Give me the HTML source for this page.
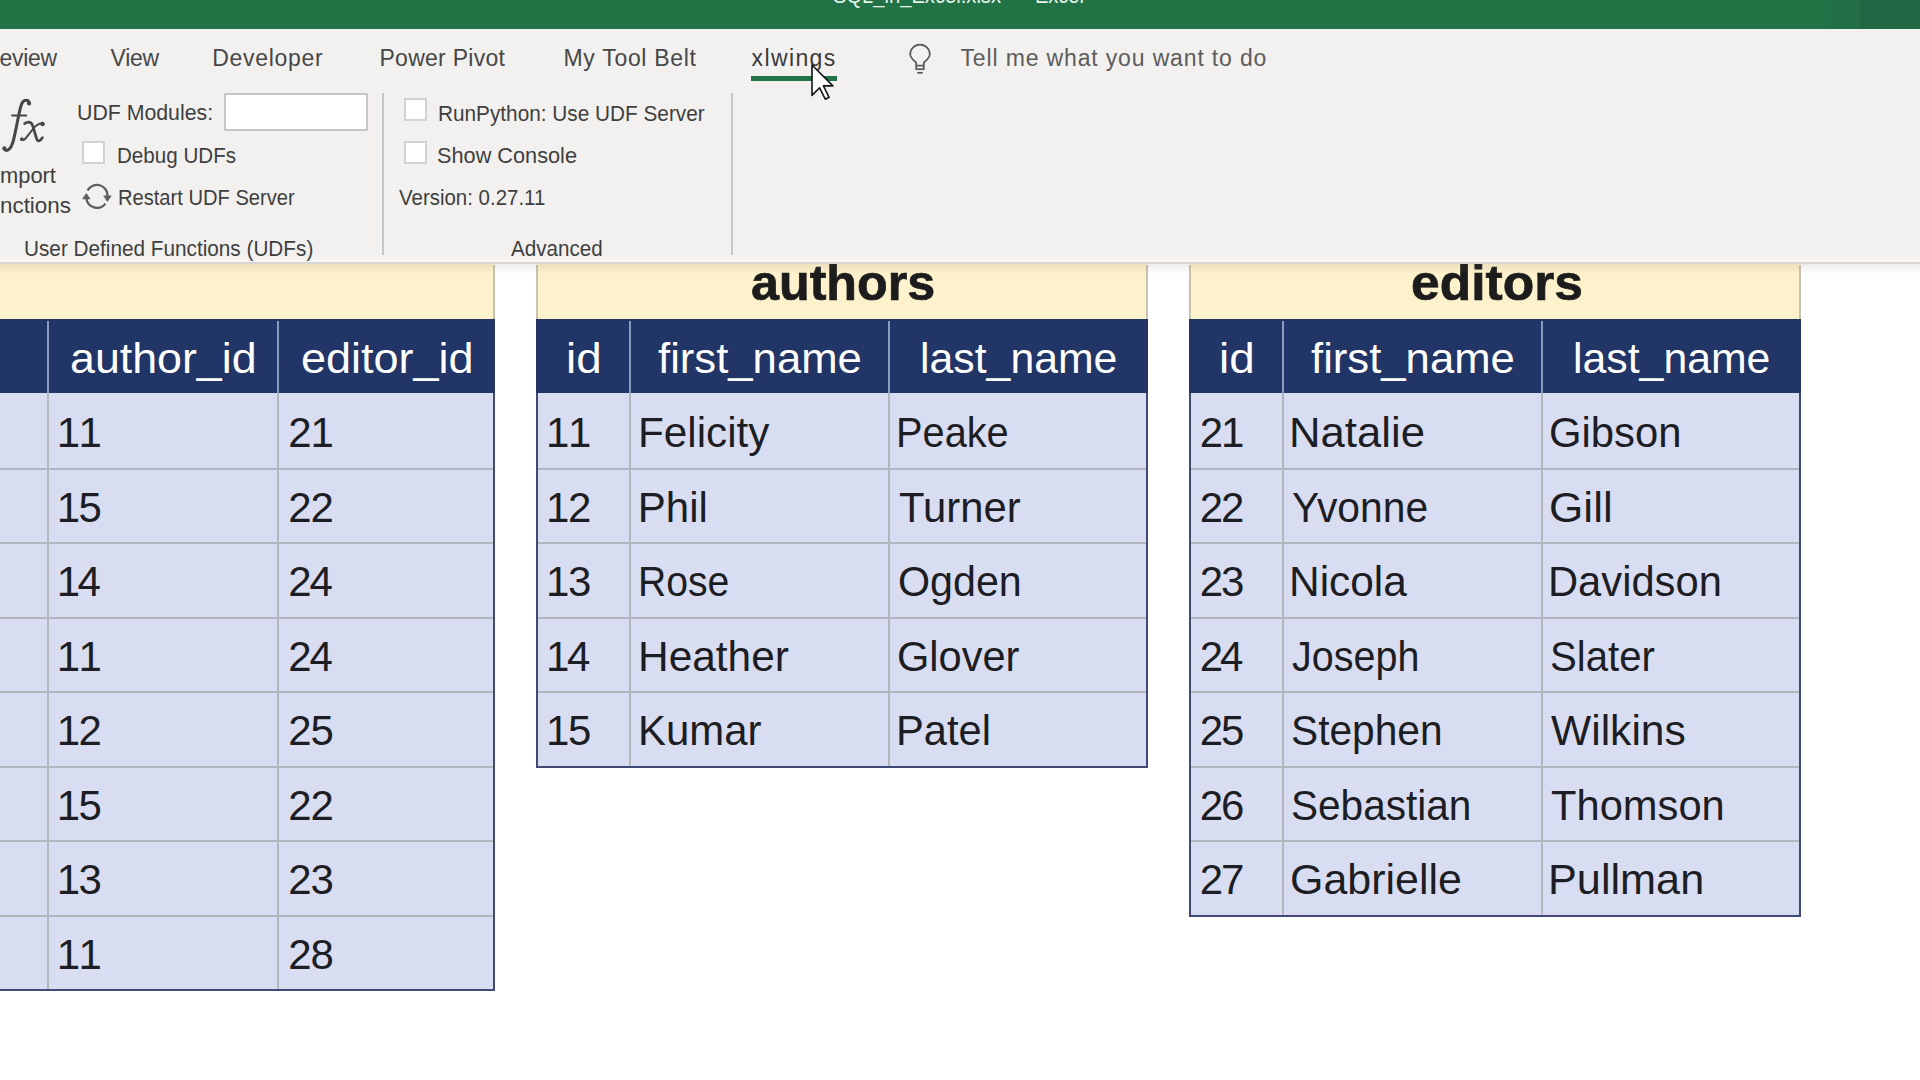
<!DOCTYPE html>
<html><head><meta charset="utf-8">
<style>
html,body{margin:0;padding:0;}
body{width:1920px;height:1080px;overflow:hidden;position:relative;background:#ffffff;font-family:"Liberation Sans",sans-serif;}
.a{position:absolute;}
.t{position:absolute;white-space:pre;font-family:"Liberation Sans",sans-serif;transform-origin:0 0;}
.cb{position:absolute;width:19px;height:19px;background:#ffffff;border:2px solid #d2d2d2;}
</style></head><body>
<!-- ===== sheet ===== -->
<!-- left table -->
<div class="a" style="left:0;top:263px;width:493px;height:56px;background:#fef2cc;"></div>
<div class="a" style="left:0;top:319px;width:493px;height:74px;background:#213566;"></div>
<div class="a" style="left:0;top:393px;width:493px;height:596px;background:#d9ddf2;"></div>
<!-- authors table -->
<div class="a" style="left:537px;top:263px;width:609px;height:56px;background:#fef2cc;"></div>
<div class="a" style="left:536px;top:319px;width:610px;height:74px;background:#213566;"></div>
<div class="a" style="left:536px;top:393px;width:610px;height:373px;background:#d9ddf2;"></div>
<!-- editors table -->
<div class="a" style="left:1190px;top:263px;width:609px;height:56px;background:#fef2cc;"></div>
<div class="a" style="left:1189px;top:319px;width:610px;height:74px;background:#213566;"></div>
<div class="a" style="left:1189px;top:393px;width:610px;height:522px;background:#d9ddf2;"></div>
<div class="a" style="left:0px;top:468px;width:493px;height:2px;background:#b2b7bf;"></div>
<div class="a" style="left:0px;top:542px;width:493px;height:2px;background:#b2b7bf;"></div>
<div class="a" style="left:0px;top:617px;width:493px;height:2px;background:#b2b7bf;"></div>
<div class="a" style="left:0px;top:691px;width:493px;height:2px;background:#b2b7bf;"></div>
<div class="a" style="left:0px;top:766px;width:493px;height:2px;background:#b2b7bf;"></div>
<div class="a" style="left:0px;top:840px;width:493px;height:2px;background:#b2b7bf;"></div>
<div class="a" style="left:0px;top:915px;width:493px;height:2px;background:#b2b7bf;"></div>
<div class="a" style="left:47px;top:321px;width:2px;height:72px;background:#8a9bbf;"></div>
<div class="a" style="left:47px;top:393px;width:2px;height:596px;background:#b2b7bf;"></div>
<div class="a" style="left:277px;top:321px;width:2px;height:72px;background:#8a9bbf;"></div>
<div class="a" style="left:277px;top:393px;width:2px;height:596px;background:#b2b7bf;"></div>
<div class="a" style="left:493px;top:319px;width:2px;height:74px;background:#22335f;"></div>
<div class="a" style="left:493px;top:393px;width:2px;height:598px;background:#404a74;"></div>
<div class="a" style="left:-5px;top:989px;width:500px;height:2px;background:#404a74;"></div>
<div class="a" style="left:493px;top:265px;width:2px;height:54px;background:#c9c2ad;"></div>
<div class="a" style="left:536px;top:468px;width:610px;height:2px;background:#b2b7bf;"></div>
<div class="a" style="left:536px;top:542px;width:610px;height:2px;background:#b2b7bf;"></div>
<div class="a" style="left:536px;top:617px;width:610px;height:2px;background:#b2b7bf;"></div>
<div class="a" style="left:536px;top:691px;width:610px;height:2px;background:#b2b7bf;"></div>
<div class="a" style="left:629px;top:321px;width:2px;height:72px;background:#8a9bbf;"></div>
<div class="a" style="left:629px;top:393px;width:2px;height:373px;background:#b2b7bf;"></div>
<div class="a" style="left:888px;top:321px;width:2px;height:72px;background:#8a9bbf;"></div>
<div class="a" style="left:888px;top:393px;width:2px;height:373px;background:#b2b7bf;"></div>
<div class="a" style="left:1146px;top:319px;width:2px;height:74px;background:#22335f;"></div>
<div class="a" style="left:1146px;top:393px;width:2px;height:375px;background:#404a74;"></div>
<div class="a" style="left:536px;top:766px;width:612px;height:2px;background:#404a74;"></div>
<div class="a" style="left:536px;top:319px;width:2px;height:74px;background:#22335f;"></div>
<div class="a" style="left:536px;top:393px;width:2px;height:373px;background:#404a74;"></div>
<div class="a" style="left:1146px;top:265px;width:2px;height:54px;background:#c9c2ad;"></div>
<div class="a" style="left:536px;top:265px;width:2px;height:54px;background:#c9c2ad;"></div>
<div class="a" style="left:1189px;top:468px;width:610px;height:2px;background:#b2b7bf;"></div>
<div class="a" style="left:1189px;top:542px;width:610px;height:2px;background:#b2b7bf;"></div>
<div class="a" style="left:1189px;top:617px;width:610px;height:2px;background:#b2b7bf;"></div>
<div class="a" style="left:1189px;top:691px;width:610px;height:2px;background:#b2b7bf;"></div>
<div class="a" style="left:1189px;top:766px;width:610px;height:2px;background:#b2b7bf;"></div>
<div class="a" style="left:1189px;top:840px;width:610px;height:2px;background:#b2b7bf;"></div>
<div class="a" style="left:1282px;top:321px;width:2px;height:72px;background:#8a9bbf;"></div>
<div class="a" style="left:1282px;top:393px;width:2px;height:522px;background:#b2b7bf;"></div>
<div class="a" style="left:1541px;top:321px;width:2px;height:72px;background:#8a9bbf;"></div>
<div class="a" style="left:1541px;top:393px;width:2px;height:522px;background:#b2b7bf;"></div>
<div class="a" style="left:1799px;top:319px;width:2px;height:74px;background:#22335f;"></div>
<div class="a" style="left:1799px;top:393px;width:2px;height:524px;background:#404a74;"></div>
<div class="a" style="left:1189px;top:915px;width:612px;height:2px;background:#404a74;"></div>
<div class="a" style="left:1189px;top:319px;width:2px;height:74px;background:#22335f;"></div>
<div class="a" style="left:1189px;top:393px;width:2px;height:522px;background:#404a74;"></div>
<div class="a" style="left:1799px;top:265px;width:2px;height:54px;background:#c9c2ad;"></div>
<div class="a" style="left:1189px;top:265px;width:2px;height:54px;background:#c9c2ad;"></div>
<div class="t" style="left:70.4px;top:338.4px;font-size:42px;line-height:42px;color:#ffffff;transform:scaleX(1.0653);">author_id</div>
<div class="t" style="left:301.4px;top:338.4px;font-size:42px;line-height:42px;color:#ffffff;transform:scaleX(1.0713);">editor_id</div>
<div class="t" style="left:56.8px;top:412.4px;font-size:42px;line-height:42px;color:#1d1d24;letter-spacing:1.46px;">11</div>
<div class="t" style="left:288.3px;top:412.4px;font-size:42px;line-height:42px;color:#1d1d24;letter-spacing:-1.16px;">21</div>
<div class="t" style="left:56.8px;top:486.9px;font-size:42px;line-height:42px;color:#1d1d24;letter-spacing:-1.66px;">15</div>
<div class="t" style="left:288.3px;top:486.9px;font-size:42px;line-height:42px;color:#1d1d24;letter-spacing:-1.16px;">22</div>
<div class="t" style="left:56.8px;top:561.4px;font-size:42px;line-height:42px;color:#1d1d24;letter-spacing:-2.66px;">14</div>
<div class="t" style="left:288.3px;top:561.4px;font-size:42px;line-height:42px;color:#1d1d24;letter-spacing:-2.16px;">24</div>
<div class="t" style="left:56.8px;top:635.9px;font-size:42px;line-height:42px;color:#1d1d24;letter-spacing:1.46px;">11</div>
<div class="t" style="left:288.3px;top:635.9px;font-size:42px;line-height:42px;color:#1d1d24;letter-spacing:-2.16px;">24</div>
<div class="t" style="left:56.8px;top:710.4px;font-size:42px;line-height:42px;color:#1d1d24;letter-spacing:-1.66px;">12</div>
<div class="t" style="left:288.3px;top:710.4px;font-size:42px;line-height:42px;color:#1d1d24;letter-spacing:-1.16px;">25</div>
<div class="t" style="left:56.8px;top:784.9px;font-size:42px;line-height:42px;color:#1d1d24;letter-spacing:-1.66px;">15</div>
<div class="t" style="left:288.3px;top:784.9px;font-size:42px;line-height:42px;color:#1d1d24;letter-spacing:-1.16px;">22</div>
<div class="t" style="left:56.8px;top:859.4px;font-size:42px;line-height:42px;color:#1d1d24;letter-spacing:-1.66px;">13</div>
<div class="t" style="left:288.3px;top:859.4px;font-size:42px;line-height:42px;color:#1d1d24;letter-spacing:-1.16px;">23</div>
<div class="t" style="left:56.8px;top:933.9px;font-size:42px;line-height:42px;color:#1d1d24;letter-spacing:1.46px;">11</div>
<div class="t" style="left:288.3px;top:933.9px;font-size:42px;line-height:42px;color:#1d1d24;letter-spacing:-1.16px;">28</div>
<div class="t" style="left:751.1px;top:257.7px;font-size:50px;line-height:50px;color:#1c1c1c;font-weight:bold;-webkit-text-stroke:0.7px #1c1c1c;transform:scaleX(1.0048);">authors</div>
<div class="t" style="left:566.2px;top:338.4px;font-size:42px;line-height:42px;color:#ffffff;transform:scaleX(1.0889);">id</div>
<div class="t" style="left:658.4px;top:338.4px;font-size:42px;line-height:42px;color:#ffffff;transform:scaleX(1.0395);">first_name</div>
<div class="t" style="left:919.5px;top:338.4px;font-size:42px;line-height:42px;color:#ffffff;transform:scaleX(1.0188);">last_name</div>
<div class="t" style="left:546.1px;top:412.4px;font-size:42px;line-height:42px;color:#1d1d24;letter-spacing:1.66px;">11</div>
<div class="t" style="left:637.8px;top:412.4px;font-size:42px;line-height:42px;color:#1d1d24;transform:scaleX(1.0057);">Felicity</div>
<div class="t" style="left:896.0px;top:412.4px;font-size:42px;line-height:42px;color:#1d1d24;transform:scaleX(0.9466);">Peake</div>
<div class="t" style="left:546.1px;top:486.9px;font-size:42px;line-height:42px;color:#1d1d24;letter-spacing:-1.46px;">12</div>
<div class="t" style="left:637.8px;top:486.9px;font-size:42px;line-height:42px;color:#1d1d24;transform:scaleX(1.0000);">Phil</div>
<div class="t" style="left:898.8px;top:486.9px;font-size:42px;line-height:42px;color:#1d1d24;transform:scaleX(0.9954);">Turner</div>
<div class="t" style="left:546.1px;top:561.4px;font-size:42px;line-height:42px;color:#1d1d24;letter-spacing:-1.46px;">13</div>
<div class="t" style="left:638.0px;top:561.4px;font-size:42px;line-height:42px;color:#1d1d24;transform:scaleX(0.9318);">Rose</div>
<div class="t" style="left:897.8px;top:561.4px;font-size:42px;line-height:42px;color:#1d1d24;transform:scaleX(0.9817);">Ogden</div>
<div class="t" style="left:546.1px;top:635.9px;font-size:42px;line-height:42px;color:#1d1d24;letter-spacing:-2.46px;">14</div>
<div class="t" style="left:637.8px;top:635.9px;font-size:42px;line-height:42px;color:#1d1d24;transform:scaleX(1.0100);">Heather</div>
<div class="t" style="left:896.8px;top:635.9px;font-size:42px;line-height:42px;color:#1d1d24;transform:scaleX(0.9900);">Glover</div>
<div class="t" style="left:546.1px;top:710.4px;font-size:42px;line-height:42px;color:#1d1d24;letter-spacing:-1.46px;">15</div>
<div class="t" style="left:637.8px;top:710.4px;font-size:42px;line-height:42px;color:#1d1d24;transform:scaleX(0.9982);">Kumar</div>
<div class="t" style="left:895.8px;top:710.4px;font-size:42px;line-height:42px;color:#1d1d24;transform:scaleX(0.9923);">Patel</div>
<div class="t" style="left:1410.5px;top:257.7px;font-size:50px;line-height:50px;color:#1c1c1c;font-weight:bold;-webkit-text-stroke:0.7px #1c1c1c;transform:scaleX(1.0312);">editors</div>
<div class="t" style="left:1219.2px;top:338.4px;font-size:42px;line-height:42px;color:#ffffff;transform:scaleX(1.0889);">id</div>
<div class="t" style="left:1311.4px;top:338.4px;font-size:42px;line-height:42px;color:#ffffff;transform:scaleX(1.0395);">first_name</div>
<div class="t" style="left:1572.5px;top:338.4px;font-size:42px;line-height:42px;color:#ffffff;transform:scaleX(1.0188);">last_name</div>
<div class="t" style="left:1199.8px;top:412.4px;font-size:42px;line-height:42px;color:#1d1d24;letter-spacing:-2.26px;">21</div>
<div class="t" style="left:1289.0px;top:412.4px;font-size:42px;line-height:42px;color:#1d1d24;transform:scaleX(1.0397);">Natalie</div>
<div class="t" style="left:1549.1px;top:412.4px;font-size:42px;line-height:42px;color:#1d1d24;transform:scaleX(0.9952);">Gibson</div>
<div class="t" style="left:1199.8px;top:486.9px;font-size:42px;line-height:42px;color:#1d1d24;letter-spacing:-2.26px;">22</div>
<div class="t" style="left:1292.1px;top:486.9px;font-size:42px;line-height:42px;color:#1d1d24;transform:scaleX(0.9714);">Yvonne</div>
<div class="t" style="left:1549.0px;top:486.9px;font-size:42px;line-height:42px;color:#1d1d24;transform:scaleX(1.0509);">Gill</div>
<div class="t" style="left:1199.8px;top:561.4px;font-size:42px;line-height:42px;color:#1d1d24;letter-spacing:-2.26px;">23</div>
<div class="t" style="left:1289.1px;top:561.4px;font-size:42px;line-height:42px;color:#1d1d24;transform:scaleX(1.0100);">Nicola</div>
<div class="t" style="left:1548.1px;top:561.4px;font-size:42px;line-height:42px;color:#1d1d24;transform:scaleX(0.9927);">Davidson</div>
<div class="t" style="left:1199.8px;top:635.9px;font-size:42px;line-height:42px;color:#1d1d24;letter-spacing:-3.26px;">24</div>
<div class="t" style="left:1292.1px;top:635.9px;font-size:42px;line-height:42px;color:#1d1d24;transform:scaleX(0.9408);">Joseph</div>
<div class="t" style="left:1550.1px;top:635.9px;font-size:42px;line-height:42px;color:#1d1d24;transform:scaleX(0.9565);">Slater</div>
<div class="t" style="left:1199.8px;top:710.4px;font-size:42px;line-height:42px;color:#1d1d24;letter-spacing:-2.26px;">25</div>
<div class="t" style="left:1291.1px;top:710.4px;font-size:42px;line-height:42px;color:#1d1d24;transform:scaleX(0.9685);">Stephen</div>
<div class="t" style="left:1551.1px;top:710.4px;font-size:42px;line-height:42px;color:#1d1d24;transform:scaleX(1.0137);">Wilkins</div>
<div class="t" style="left:1199.8px;top:784.9px;font-size:42px;line-height:42px;color:#1d1d24;letter-spacing:-2.26px;">26</div>
<div class="t" style="left:1291.1px;top:784.9px;font-size:42px;line-height:42px;color:#1d1d24;transform:scaleX(0.9659);">Sebastian</div>
<div class="t" style="left:1551.1px;top:784.9px;font-size:42px;line-height:42px;color:#1d1d24;transform:scaleX(0.9924);">Thomson</div>
<div class="t" style="left:1199.8px;top:859.4px;font-size:42px;line-height:42px;color:#1d1d24;letter-spacing:-2.26px;">27</div>
<div class="t" style="left:1290.1px;top:859.4px;font-size:42px;line-height:42px;color:#1d1d24;transform:scaleX(1.0229);">Gabrielle</div>
<div class="t" style="left:1548.0px;top:859.4px;font-size:42px;line-height:42px;color:#1d1d24;transform:scaleX(1.0295);">Pullman</div>
<!-- ===== ribbon ===== -->
<div class="a" style="left:0;top:0;width:1920px;height:29px;background:#217346;overflow:hidden;">
<div class="a" style="left:1828px;top:0;width:32px;height:29px;background:#226f48;"></div><div class="a" style="left:1860px;top:0;width:60px;height:29px;background:#226743;"></div>
<div class="t" style="left:833px;top:-15px;font-size:22px;line-height:22px;color:#e6f2ea;transform:scaleX(0.916);">SQL_in_Excel.xlsx</div>
<div class="t" style="left:1013px;top:-15px;font-size:22px;line-height:22px;color:#e6f2ea;">-</div>
<div class="t" style="left:1035px;top:-15px;font-size:22px;line-height:22px;color:#e6f2ea;transform:scaleX(0.91);">Excel</div>
</div>
<div class="a" style="left:0;top:29px;width:1920px;height:234px;background:#f2f1ef;"></div>
<div class="a" style="left:0;top:259px;width:1920px;height:3px;background:#f5f4f3;"></div>
<div class="a" style="left:0;top:262px;width:1920px;height:2px;background:#dad6d1;"></div>
<div class="a" style="left:0;top:264px;width:1920px;height:10px;background:linear-gradient(180deg,rgba(110,100,90,0.12),rgba(110,100,90,0));"></div>
<!-- xlwings underline -->
<div class="a" style="left:751px;top:76px;width:86px;height:5px;background:#217346;"></div>
<!-- separators -->
<div class="a" style="left:382px;top:93px;width:2px;height:162px;background:#c6c6c6;"></div>
<div class="a" style="left:731px;top:93px;width:2px;height:162px;background:#c6c6c6;"></div>
<!-- textbox -->
<div class="a" style="left:224px;top:93px;width:140px;height:34px;background:#fff;border:2px solid #c6c6c6;"></div>
<!-- checkboxes -->
<div class="cb" style="left:82px;top:141px;"></div>
<div class="cb" style="left:404px;top:98px;"></div>
<div class="cb" style="left:404px;top:141px;"></div>
<div class="t" style="left:-0.5px;top:47.0px;font-size:23px;line-height:23px;color:#474747;letter-spacing:-0.30px;">eview</div>
<div class="t" style="left:110.5px;top:47.0px;font-size:23px;line-height:23px;color:#474747;letter-spacing:-0.28px;">View</div>
<div class="t" style="left:212.2px;top:47.0px;font-size:23px;line-height:23px;color:#474747;letter-spacing:0.72px;">Developer</div>
<div class="t" style="left:379.5px;top:47.0px;font-size:23px;line-height:23px;color:#474747;letter-spacing:0.27px;">Power Pivot</div>
<div class="t" style="left:563.5px;top:47.0px;font-size:23px;line-height:23px;color:#474747;letter-spacing:0.69px;">My Tool Belt</div>
<div class="t" style="left:751.5px;top:47.0px;font-size:23px;line-height:23px;color:#3a3a3a;letter-spacing:1.40px;">xlwings</div>
<div class="t" style="left:960.5px;top:47.0px;font-size:23px;line-height:23px;color:#5c5c5c;letter-spacing:0.85px;">Tell me what you want to do</div>
<div class="t" style="left:77.0px;top:102.0px;font-size:22.2px;line-height:22.2px;color:#3f3f3f;transform:scaleX(0.9597);">UDF Modules:</div>
<div class="t" style="left:116.6px;top:144.5px;font-size:22.2px;line-height:22.2px;color:#3f3f3f;transform:scaleX(0.9281);">Debug UDFs</div>
<div class="t" style="left:118.3px;top:187.0px;font-size:22.2px;line-height:22.2px;color:#3f3f3f;transform:scaleX(0.9069);">Restart UDF Server</div>
<div class="t" style="left:-0.5px;top:164.5px;font-size:22.2px;line-height:22.2px;color:#3f3f3f;transform:scaleX(0.9865);">mport</div>
<div class="t" style="left:-0.5px;top:194.5px;font-size:22.2px;line-height:22.2px;color:#3f3f3f;transform:scaleX(1.0086);">nctions</div>
<div class="t" style="left:23.6px;top:238.0px;font-size:22.2px;line-height:22.2px;color:#3f3f3f;transform:scaleX(0.9348);">User Defined Functions (UDFs)</div>
<div class="t" style="left:437.6px;top:102.6px;font-size:22.2px;line-height:22.2px;color:#3f3f3f;transform:scaleX(0.9362);">RunPython: Use UDF Server</div>
<div class="t" style="left:437.1px;top:145.2px;font-size:22.2px;line-height:22.2px;color:#3f3f3f;transform:scaleX(0.9786);">Show Console</div>
<div class="t" style="left:399.1px;top:187.3px;font-size:22.2px;line-height:22.2px;color:#3f3f3f;transform:scaleX(0.9219);">Version: 0.27.11</div>
<div class="t" style="left:510.9px;top:237.6px;font-size:22.2px;line-height:22.2px;color:#3f3f3f;transform:scaleX(0.9287);">Advanced</div>
<!-- fx -->
<svg class="a" style="left:0px;top:90px;" width="60" height="70" viewBox="0 90 60 70">
<g fill="none" stroke="#474747" stroke-linecap="round">
<path d="M29.2 103.2 C28.8 99.6 24.2 98.8 21.8 103.5 C19.2 109 16.2 131 12.8 142.5 C10.8 149 7.2 152.2 4.4 149.2" stroke-width="3"/>
<path d="M12.2 115.6 L26.2 115.6" stroke-width="2"/>
<path d="M24.6 123.6 C28 121.4 31.6 121.6 32.8 126 L36.4 138.2 C37.6 142.2 40.2 141.2 42.4 137.8" stroke-width="2.8"/>
<path d="M42.6 123.6 C39 123 36.2 125 33 129 L26.2 137.6 C24.6 140 22.6 140.6 21.6 139.2" stroke-width="2"/>
</g>
<g fill="#474747"><circle cx="29" cy="103.4" r="2.1"/><circle cx="4.4" cy="148.4" r="2.1"/><circle cx="42.6" cy="124" r="2.2"/><circle cx="21.9" cy="139.2" r="1.9"/></g>
</svg>
<!-- restart icon -->
<svg class="a" style="left:76px;top:178px;" width="44" height="40" viewBox="76 178 44 40">
<path d="M87.6 190.4 A10.6 10.6 0 0 1 107.5 196" fill="none" stroke="#5e5e5e" stroke-width="2.3"/>
<polygon points="103.2,195.4 111.8,195.4 107.4,201.9" fill="#5e5e5e"/>
<path d="M105.4 203.6 A10.6 10.6 0 0 1 86.4 198.4" fill="none" stroke="#5e5e5e" stroke-width="2.3"/>
<polygon points="82,199.2 90.6,199.2 86.3,192.9" fill="#5e5e5e"/>
</svg>
<!-- lightbulb -->
<svg class="a" style="left:900px;top:38px;" width="40" height="42" viewBox="900 38 40 42">
<path d="M916.2 65.2 L916.2 62.6 C912.6 59.4 910.2 57.2 910.2 54.4 A9.8 9.8 0 1 1 929.8 54.4 C929.8 57.2 927.4 59.4 923.8 62.6 L923.8 65.2" fill="none" stroke="#585858" stroke-width="1.7"/>
<rect x="916.2" y="65.6" width="7.6" height="3.6" fill="none" stroke="#585858" stroke-width="1.7"/>
<line x1="917.2" y1="72.8" x2="922.8" y2="72.8" stroke="#585858" stroke-width="1.7"/>
</svg>
<!-- cursor -->
<svg class="a" style="left:805px;top:60px;" width="40" height="45" viewBox="805 60 40 45">
<polygon points="812,65 812,95.4 819.6,87.8 825.3,99.2 829.1,97.3 823.4,85.9 832.9,85.9" fill="#fff" stroke="#151515" stroke-width="1.6" stroke-linejoin="round"/>
</svg>

</body></html>
